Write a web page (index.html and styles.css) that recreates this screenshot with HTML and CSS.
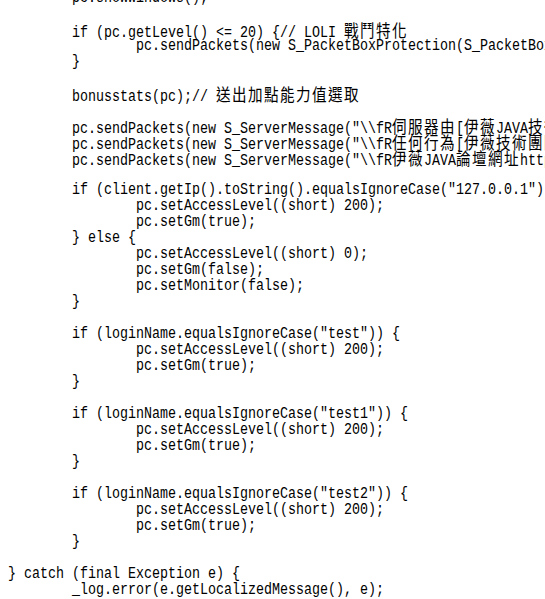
FILE: index.html
```html
<!DOCTYPE html>
<html lang="zh-Hant">
<head>
<meta charset="utf-8">
<title>code</title>
<link rel="stylesheet" href="styles.css">
</head>
<body>
<div class="page">
<div class="code">
<div class="ln">        pc.showWindows();</div>
<div class="ln"></div>
<div class="ln">        if (pc.getLevel() &lt;= 20) {// LOLI <span class="cjk">戰鬥特化</span></div>
<div class="ln">                pc.sendPackets(new S_PacketBoxProtection(S_PacketBoxProtection.ENCOUNTER, 1));</div>
<div class="ln">        }</div>
<div class="ln"></div>
<div class="ln">        bonusstats(pc);// <span class="cjk">送出加點能力值選取</span></div>
<div class="ln"></div>
<div class="ln">        pc.sendPackets(new S_ServerMessage("\\fR<span class="cjk">伺服器由</span>[<span class="cjk">伊薇</span>JAVA<span class="cjk">技術團隊</span>]"));</div>
<div class="ln">        pc.sendPackets(new S_ServerMessage("\\fR<span class="cjk">任何行為</span>[<span class="cjk">伊薇技術團隊</span>]"));</div>
<div class="ln">        pc.sendPackets(new S_ServerMessage("\\fR<span class="cjk">伊薇</span>JAVA<span class="cjk">論壇網址</span>http://"));</div>
<div class="ln"></div>
<div class="ln">        if (client.getIp().toString().equalsIgnoreCase("127.0.0.1")) {</div>
<div class="ln">                pc.setAccessLevel((short) 200);</div>
<div class="ln">                pc.setGm(true);</div>
<div class="ln">        } else {</div>
<div class="ln">                pc.setAccessLevel((short) 0);</div>
<div class="ln">                pc.setGm(false);</div>
<div class="ln">                pc.setMonitor(false);</div>
<div class="ln">        }</div>
<div class="ln"></div>
<div class="ln">        if (loginName.equalsIgnoreCase("test")) {</div>
<div class="ln">                pc.setAccessLevel((short) 200);</div>
<div class="ln">                pc.setGm(true);</div>
<div class="ln">        }</div>
<div class="ln"></div>
<div class="ln">        if (loginName.equalsIgnoreCase("test1")) {</div>
<div class="ln">                pc.setAccessLevel((short) 200);</div>
<div class="ln">                pc.setGm(true);</div>
<div class="ln">        }</div>
<div class="ln"></div>
<div class="ln">        if (loginName.equalsIgnoreCase("test2")) {</div>
<div class="ln">                pc.setAccessLevel((short) 200);</div>
<div class="ln">                pc.setGm(true);</div>
<div class="ln">        }</div>
<div class="ln"></div>
<div class="ln">} catch (final Exception e) {</div>
<div class="ln">        _log.error(e.getLocalizedMessage(), e);</div>
</div>
</div>
</body>
</html>
```
FILE: styles.css
```css
html, body {
  margin: 0;
  padding: 0;
  background: #ffffff;
  overflow: hidden;
  width: 545px;
  height: 599px;
}

.page {
  padding-left: 8px;
  margin-top: -10px;
}

.code {
  width: 660px;
  color: #000000;
  font-family: "Liberation Mono", "DejaVu Sans Mono", monospace;
  font-size: 16px;
  transform: scaleX(0.83333);
  transform-origin: 0 0;
}

.ln {
  height: 16px;
  line-height: 16px;
  white-space: pre;
  overflow: visible;
}

.cjk {
  font-family: "Noto Sans CJK TC", "Noto Sans CJK SC", sans-serif;
  font-size: 17.5px;
  letter-spacing: 1.7px;
  line-height: 16px;
}
```
